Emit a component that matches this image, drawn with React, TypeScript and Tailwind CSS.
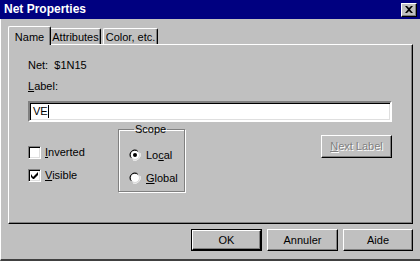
import React from "react";

const raised =
  "bg-[#c0c0c0] border border-t-white border-l-white border-r-black border-b-black shadow-[inset_-1px_-1px_0_#808080]";

function Button({
  children,
  primary,
  disabled,
  className = "",
}: {
  children: React.ReactNode;
  primary?: boolean;
  disabled?: boolean;
  className?: string;
}) {
  const inner = (
    <div
      className={`${raised} flex-1 flex items-center justify-center ${
        disabled ? "text-[#808080] [text-shadow:1px_1px_0_#fff]" : "text-black"
      }`}
    >
      {children}
    </div>
  );
  if (primary) {
    return <div className={`flex border border-black ${className}`}>{inner}</div>;
  }
  return <div className={`flex ${className}`}>{inner}</div>;
}

function Checkbox({ checked, children }: { checked?: boolean; children: React.ReactNode }) {
  return (
    <div className="flex items-center h-[13px]">
      <div className="w-[13px] h-[13px] bg-white border border-t-[#808080] border-l-[#808080] border-r-white border-b-white shadow-[inset_1px_1px_0_#000,inset_-1px_-1px_0_#dfdfdf] flex items-center justify-center">
        {checked && (
          <svg width="7" height="7" viewBox="0 0 7 7">
            <path d="M0 2v3l2 2h1l4-4V0L2 5z" fill="#000" />
          </svg>
        )}
      </div>
      <span className="ml-[4px]">{children}</span>
    </div>
  );
}

function Radio({ checked, children }: { checked?: boolean; children: React.ReactNode }) {
  return (
    <div className="flex items-center h-[12px]">
      <svg width="12" height="12" viewBox="0 0 12 12">
        <path d="M8 1A5.5 5.5 0 0 0 1 8" stroke="#808080" fill="none" />
        <path d="M9 2.5A4.5 4.5 0 0 0 2.5 9" stroke="#000" fill="none" />
        <circle cx="6" cy="6" r="4" fill="#fff" />
        <path d="M11 4A5.5 5.5 0 0 1 4 11" stroke="#fff" fill="none" />
        <path d="M9.5 3A4.5 4.5 0 0 1 3 9.5" stroke="#dfdfdf" fill="none" />
        {checked && <circle cx="6" cy="6" r="2" fill="#000" />}
      </svg>
      <span className="ml-[5px]">{children}</span>
    </div>
  );
}

export default function App() {
  return (
    <div className="w-[420px] h-[261px] bg-[#c0c0c0] flex flex-col text-[11px] leading-[13px] text-black font-['Liberation_Sans',Arial,sans-serif]">
      {/* title bar */}
      <div className="h-[19px] bg-[#000080] flex items-center justify-between pl-[4px] pr-[3px]">
        <span className="text-white font-bold text-[12px]">Net Properties</span>
        <div className={`${raised} w-[16px] h-[14px] flex items-center justify-center`}>
          <svg width="8" height="7" viewBox="0 0 8 7">
            <path d="M0 0h2l2 2 2-2h2L5 3.5 8 7H6L4 5 2 7H0l3-3.5z" fill="#000" />
          </svg>
        </div>
      </div>

      <div className="flex-1 flex flex-col border-l border-l-white border-b-2 border-b-[#404040]">
        {/* tabs */}
        <div className="flex items-end mt-[7px] ml-[7px] h-[18px]">
          <div className="relative z-10 -mb-px h-[19px] w-[43px] bg-[#c0c0c0] border-t border-l border-t-white border-l-white border-r border-r-black shadow-[inset_-1px_0_0_#808080] rounded-t-[2px] flex justify-center pt-[4px]">
            Name
          </div>
          <div className="h-[16px] w-[50px] border-t border-t-white border-r border-r-black shadow-[inset_-1px_0_0_#808080] rounded-tr-[2px] flex justify-center pt-[2px]">
            Attributes
          </div>
          <div className="h-[16px] w-[55px] ml-[2px] border-t border-l border-t-white border-l-white border-r border-r-black shadow-[inset_-1px_0_0_#808080] rounded-t-[2px] flex justify-center pt-[2px]">
            Color, etc.
          </div>
        </div>

        {/* panel */}
        <div className="ml-[7px] w-[405px] h-[180px] border border-t-white border-l-white border-r-black border-b-black shadow-[inset_-1px_-1px_0_#808080] flex flex-col pl-[19px]">
          <div className="mt-[14px]">Net:&nbsp; $1N15</div>
          <div className="mt-[8px]">
            <u>L</u>abel:
          </div>
          <div className="mt-[8px] w-[364px] h-[21px] bg-white border-2 border-t-[#808080] border-l-[#808080] border-r-white border-b-white shadow-[inset_1px_1px_0_#000,inset_-1px_-1px_0_#dfdfdf] flex items-center pl-[3px]">
            VE<span className="w-px h-[13px] bg-black" />
          </div>

          <div className="flex mt-[4px]">
            <div className="flex flex-col gap-[10px] mt-[20px] w-[90px]">
              <Checkbox>
                <u>I</u>nverted
              </Checkbox>
              <Checkbox checked>
                <u>V</u>isible
              </Checkbox>
            </div>

            <fieldset className="w-[67px] h-[69px] border border-[#808080] shadow-[inset_1px_1px_0_#fff,1px_1px_0_#fff] pl-[10px] -mt-[3px]">
              <legend className="ml-[5px] px-[1px]">Scope</legend>
              <div className="flex flex-col gap-[11px] mt-[13px]">
                <Radio checked>
                  Lo<u>c</u>al
                </Radio>
                <Radio>
                  <u>G</u>lobal
                </Radio>
              </div>
            </fieldset>

            <Button disabled className="ml-[136px] mt-[9px] w-[71px] h-[23px]">
              <span>
                <u>N</u>ext Label
              </span>
            </Button>
          </div>
        </div>

        {/* dialog buttons */}
        <div className="flex justify-end gap-[5px] mt-[5px] mr-[7px]">
          <Button primary className="w-[71px] h-[22px]">
            OK
          </Button>
          <Button className="w-[71px] h-[22px]">Annuler</Button>
          <Button className="w-[70px] h-[22px]">Aide</Button>
        </div>
      </div>
    </div>
  );
}
